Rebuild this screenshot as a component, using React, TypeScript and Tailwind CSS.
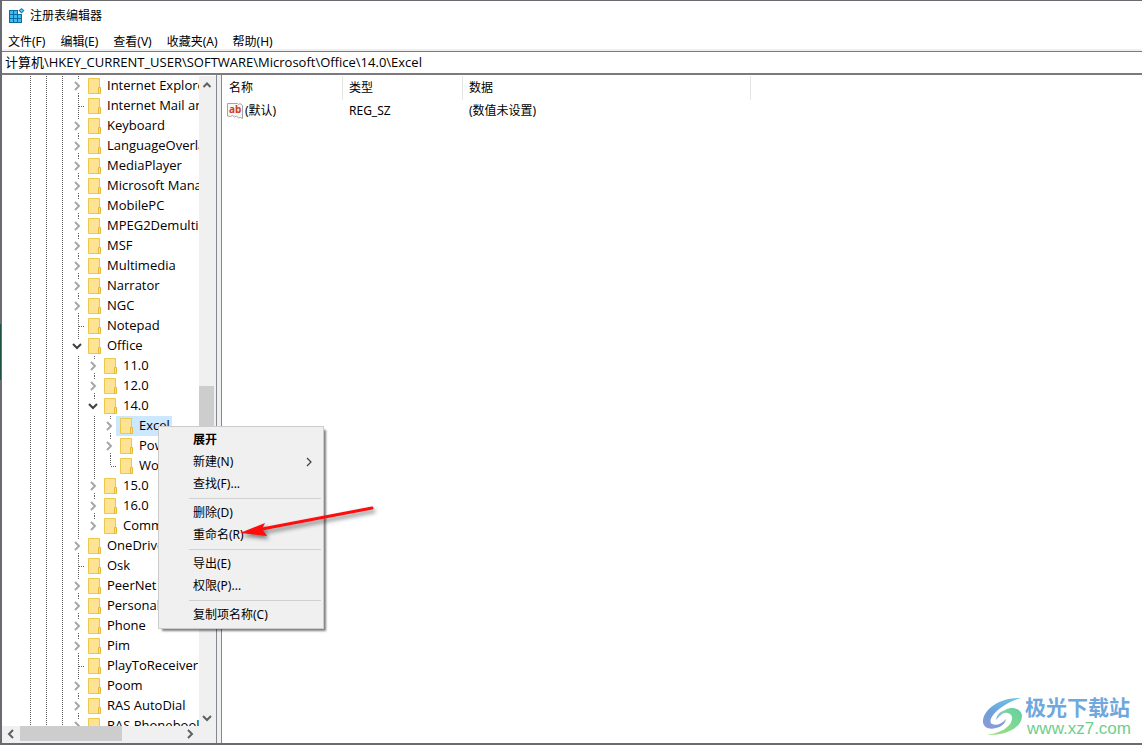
import React, { useState } from 'react';

type NodeState = 'closed' | 'open' | 'leaf';

interface RegistryKey {
  name: string;
  state: NodeState;
  // number of guide line columns left of the node
  depth: number;
  last?: boolean;
}

const keys: RegistryKey[] = [
  { name: 'Internet Explorer', state: 'closed', depth: 3 },
  { name: 'Internet Mail and News', state: 'leaf', depth: 3 },
  { name: 'Keyboard', state: 'closed', depth: 3 },
  { name: 'LanguageOverlay', state: 'closed', depth: 3 },
  { name: 'MediaPlayer', state: 'closed', depth: 3 },
  { name: 'Microsoft Management Console', state: 'closed', depth: 3 },
  { name: 'MobilePC', state: 'closed', depth: 3 },
  { name: 'MPEG2Demultiplexer', state: 'closed', depth: 3 },
  { name: 'MSF', state: 'closed', depth: 3 },
  { name: 'Multimedia', state: 'closed', depth: 3 },
  { name: 'Narrator', state: 'closed', depth: 3 },
  { name: 'NGC', state: 'closed', depth: 3 },
  { name: 'Notepad', state: 'leaf', depth: 3 },
  { name: 'Office', state: 'open', depth: 3 },
  { name: '11.0', state: 'closed', depth: 4 },
  { name: '12.0', state: 'closed', depth: 4 },
  { name: '14.0', state: 'open', depth: 4 },
  { name: 'Excel', state: 'closed', depth: 5 },
  { name: 'PowerPoint', state: 'closed', depth: 5 },
  { name: 'Word', state: 'leaf', depth: 5, last: true },
  { name: '15.0', state: 'closed', depth: 4 },
  { name: '16.0', state: 'closed', depth: 4 },
  { name: 'Common', state: 'closed', depth: 4, last: true },
  { name: 'OneDrive', state: 'closed', depth: 3 },
  { name: 'Osk', state: 'leaf', depth: 3 },
  { name: 'PeerNet', state: 'closed', depth: 3 },
  { name: 'Personalization', state: 'closed', depth: 3 },
  { name: 'Phone', state: 'closed', depth: 3 },
  { name: 'Pim', state: 'closed', depth: 3 },
  { name: 'PlayToReceiver', state: 'leaf', depth: 3 },
  { name: 'Poom', state: 'closed', depth: 3 },
  { name: 'RAS AutoDial', state: 'closed', depth: 3 },
  { name: 'RAS Phonebook', state: 'closed', depth: 3 },
];

const menus = ['文件(F)', '编辑(E)', '查看(V)', '收藏夹(A)', '帮助(H)'];

const contextGroups = [
  ['展开', '新建(N)', '查找(F)...'],
  ['删除(D)', '重命名(R)'],
  ['导出(E)', '权限(P)...'],
  ['复制项名称(C)'],
];

const DOTS_Y = 'bg-[repeating-linear-gradient(to_bottom,#606060_0_1px,transparent_1px_2px)]';
const DOTS_X = 'bg-[repeating-linear-gradient(to_right,#606060_0_1px,transparent_1px_2px)]';

function RegeditIcon() {
  return (
    <svg width="16" height="16" viewBox="0 0 16 16" aria-hidden="true">
      <path d="M0 2h9v4h4v9H0z" fill="#0b6a9e" />
      <path
        d="M1 3h3v3H1zM5 3h3v3H5zM1 7h3v3H1zM5 7h3v3H5zM9 7h3v3H9zM1 11h3v3H1zM5 11h3v3H5zM9 11h3v3H9z"
        fill="#3cbcf0"
      />
      <path d="M12.500 0l3 2.500-3 3-3-3z" fill="#0b7fc0" />
      <path d="M12.500 1.300l1.500 1.200-1.500 1.500-1.500-1.500z" fill="#6fd4f8" />
    </svg>
  );
}

function FolderIcon() {
  return (
    <svg width="13" height="16" viewBox="0 0 13 16" className="shrink-0" aria-hidden="true">
      <path d="M0.500 0.500h11v15h-11z" fill="#ffe394" stroke="#ecc94b" />
      <path d="M10.500 9.500h2v6h-2z" fill="#ffe394" stroke="#e3b935" />
    </svg>
  );
}

function StringValueIcon() {
  return (
    <svg width="16" height="16" viewBox="0 0 16 16" className="shrink-0" aria-hidden="true">
      <path
        d="M0.500 0.500h10l1 1 1.500-1 2.500 2v13l-2-1-2 .500-2-2-2 1-2-1.500-2 1-3-.500z"
        fill="#f7f7f7"
        stroke="#a3a3a3"
      />
      <text x="2" y="10" className="fill-[#d0401c] font-['Noto_Sans'] text-[10px] font-bold">ab</text>
    </svg>
  );
}

function Arrow({ d, color = '#606060' }: { d: string; color?: string }) {
  return (
    <svg width="10" height="10" viewBox="0 0 10 10" className="shrink-0" aria-hidden="true">
      <path d={d} fill="none" stroke={color} strokeWidth="2" />
    </svg>
  );
}

const UP = 'M1.500 7L5 3.500L8.500 7';
const DOWN = 'M1 3L5 7L9 3';
const LEFT = 'M7 1L3 5L7 9';
const RIGHT = 'M3 1L7 5L3 9';

interface TreeNodeProps {
  item: RegistryKey;
  selected: boolean;
  onSelect: () => void;
}

function TreeNode({ item, selected, onSelect }: TreeNodeProps) {
  return (
    <li className="flex h-5 items-stretch">
      {Array.from({ length: item.depth }, (_, i) => (
        <span key={i} className="flex w-4 shrink-0 pl-2">
          <span className={`w-px ${DOTS_Y}`} />
        </span>
      ))}
      {item.state === 'leaf' ? (
        <span className="flex w-[14px] shrink-0 pl-2">
          <span className={`w-px ${DOTS_Y} ${item.last ? 'h-[10px]' : 'h-5'}`} />
          <span className={`mt-[10px] h-px flex-1 ${DOTS_X}`} />
        </span>
      ) : (
        <button aria-label={item.name} className="flex w-[14px] shrink-0 flex-col pl-2">
          <span className={`h-[3px] w-px ${DOTS_Y}`} />
          <span className="-ml-[6px] flex h-[14px] items-center">
            <Arrow d={item.state === 'open' ? DOWN : RIGHT} color={item.state === 'open' ? '#404040' : '#a6a6a6'} />
          </span>
          {!item.last && item.state === 'closed' && <span className={`h-[3px] w-px ${DOTS_Y}`} />}
        </button>
      )}
      <button
        onClick={onSelect}
        className={`flex items-center gap-[6px] pl-1 whitespace-nowrap ${selected ? 'bg-[#cce8ff] pr-[2px]' : ''}`}
      >
        <FolderIcon />
        <span>{item.name}</span>
      </button>
    </li>
  );
}

function ContextMenu() {
  return (
    <div
      role="menu"
      className="absolute top-[425px] left-[156px] w-[166px] border border-[#cccccc] bg-[#f0f0f0] p-[2px] shadow-[3px_3px_2px_-1px_rgba(0,0,0,0.5)]"
    >
      {contextGroups.map((group, i) => (
        <div key={i}>
          {i > 0 && (
            <div className="ml-7 flex h-[7px] items-center">
              <div className="h-px w-full bg-[#d0d0d0]" />
            </div>
          )}
          {group.map((label) => (
            <button
              key={label}
              role="menuitem"
              className="flex h-[22px] w-full items-center justify-between pr-2 pl-8 hover:bg-[#91c9f7]"
            >
              <span className={label === '展开' ? 'font-bold' : ''}>{label}</span>
              {label === '新建(N)' && (
                <svg width="8" height="10" viewBox="0 0 8 10" aria-hidden="true">
                  <path d="M2 1l4 4-4 4" fill="none" stroke="#404040" strokeWidth="1.200" />
                </svg>
              )}
            </button>
          ))}
        </div>
      ))}
    </div>
  );
}

function PointerArrow() {
  return (
    <svg
      width="142"
      height="38"
      viewBox="0 0 142 38"
      className="pointer-events-none absolute top-[503px] left-[238px] drop-shadow-[2px_3px_2px_rgba(0,0,0,0.5)]"
      aria-hidden="true"
    >
      <path d="M22 25L132 4" stroke="#ff0d0d" strokeWidth="3" strokeLinecap="round" />
      <path d="M0 29L25 19L22 25L27 32z" fill="#ff0d0d" />
    </svg>
  );
}

function Watermark() {
  return (
    <div className="pointer-events-none absolute right-[11px] bottom-1 flex items-center gap-[2px]">
      <svg width="41" height="40" viewBox="0 0 41 40" aria-hidden="true">
        <defs>
          <linearGradient id="aurora" x1="0.700" y1="0" x2="0.300" y2="1">
            <stop offset="0" stopColor="#6cc0ea" />
            <stop offset="0.600" stopColor="#6f9fd8" />
            <stop offset="1" stopColor="#8a9bd8" />
          </linearGradient>
          <linearGradient id="leaf" x1="0" y1="1" x2="1" y2="0">
            <stop offset="0" stopColor="#a4e27c" />
            <stop offset="1" stopColor="#62cfa6" />
          </linearGradient>
        </defs>
        <path d="M39 1C21 0 3 10 1 23c-1 8 7 10 13 8 5-1 9-4 10-9-4 5-10 7-14 5C4 23 17 7 39 1z" fill="url(#aurora)" />
        <path d="M14 23c1-7 7-11 13-9-5 1-9 4-13 9z" fill="#8fb8e6" />
        <path d="M19 16c8-8 19-6 21 2 1 11-14 21-35 20 13-2 25-8 25-17 0-5-5-6-11-5z" fill="url(#leaf)" />
      </svg>
      <div>
        <div className="text-[21px] leading-6 font-bold text-[#6fa8dc]">极光下载站</div>
        <div className="pl-[2px] font-['Liberation_Sans'] text-[17px] leading-5 text-[#6fce8b]">www.xz7.com</div>
      </div>
    </div>
  );
}

export default function App() {
  const [selected, setSelected] = useState('Excel');
  const [path, setPath] = useState('计算机\\HKEY_CURRENT_USER\\SOFTWARE\\Microsoft\\Office\\14.0\\Excel');

  return (
    <div className="relative flex h-screen flex-col border-t border-b-2 border-l-2 border-[#6a6b70] bg-white font-['Noto_Sans','Noto_Sans_CJK_SC',sans-serif] text-[12px] text-black">
      {/* sliver of the window behind */}
      <div className="absolute top-[323px] -left-[2px] h-14 w-px bg-[#1f5244]" />

      <header className="flex h-[30px] shrink-0 items-center gap-[5px] pl-[7px]">
        <RegeditIcon />
        <h1>注册表编辑器</h1>
      </header>
      <nav className="flex h-5 shrink-0 items-stretch gap-[15px] border-b-2 border-[#f0f0f0] pt-[2px] pl-[6px]">
        {menus.map((menu) => (
          <button key={menu}>{menu}</button>
        ))}
      </nav>
      <input
        aria-label="地址"
        value={path}
        onChange={(e) => setPath(e.target.value)}
        className="h-6 w-full shrink-0 border-t border-b-2 border-[#7a7a7f] pb-[2px] pl-[3px] font-['Open_Sans','Noto_Sans_CJK_SC',sans-serif] text-[13px] outline-none"
      />

      <main className="flex min-h-0 flex-1">
        <aside className="flex w-[215px] shrink-0 flex-col border-r border-[#828790] pt-px">
          <div className="flex min-h-0 flex-1">
            <ul className="min-w-0 flex-1 overflow-hidden pl-5 font-['Open_Sans',sans-serif] text-[13px]">
              {keys.map((item) => (
                <TreeNode
                  key={item.name}
                  item={item}
                  selected={selected === item.name}
                  onSelect={() => setSelected(item.name)}
                />
              ))}
            </ul>
            <div className="flex w-[17px] flex-col items-center bg-[#f0f0f0] pr-[2px]">
              <button aria-label="向上滚动" className="flex h-[17px] items-center">
                <Arrow d={UP} />
              </button>
              <div className="flex w-full flex-1 flex-col">
                <div className="flex-[293]" />
                <div className="flex-[66] bg-[#cdcdcd]" />
                <div className="flex-[256]" />
              </div>
              <button aria-label="向下滚动" className="flex h-[17px] items-center">
                <Arrow d={DOWN} />
              </button>
            </div>
          </div>
          <div className="flex h-[17px] shrink-0 items-stretch bg-[#f0f0f0] pr-[17px] pb-[2px]">
            <button aria-label="向左滚动" className="flex w-[18px] items-center justify-center">
              <Arrow d={LEFT} />
            </button>
            <div className="flex flex-1">
              <div className="flex-[102] bg-[#cdcdcd]" />
              <div className="flex-[59]" />
            </div>
            <button aria-label="向右滚动" className="flex w-[18px] items-center justify-center">
              <Arrow d={RIGHT} />
            </button>
          </div>
        </aside>
        <div className="w-1 shrink-0 bg-[#f0f0f0]" />
        <section className="min-w-0 flex-1 border-l border-[#828790] pt-px">
          <table className="w-[529px] table-fixed border-separate border-spacing-0 text-left">
            <colgroup>
              <col className="w-[121px]" />
              <col className="w-[120px]" />
              <col className="w-[288px]" />
            </colgroup>
            <thead>
              <tr className="h-6">
                <th className="border-r border-[#e5e5e5] pl-[7px] font-normal">名称</th>
                <th className="border-r border-[#e5e5e5] pl-[6px] font-normal">类型</th>
                <th className="border-r border-[#e5e5e5] pl-[6px] font-normal">数据</th>
              </tr>
            </thead>
            <tbody>
              <tr className="h-[22px]">
                <td className="pl-[5px]">
                  <span className="flex items-center gap-[2px]">
                    <StringValueIcon />
                    (默认)
                  </span>
                </td>
                <td className="pl-[6px]">REG_SZ</td>
                <td className="pl-[6px]">(数值未设置)</td>
              </tr>
            </tbody>
          </table>
        </section>
      </main>

      <ContextMenu />
      <PointerArrow />
      <Watermark />
    </div>
  );
}
